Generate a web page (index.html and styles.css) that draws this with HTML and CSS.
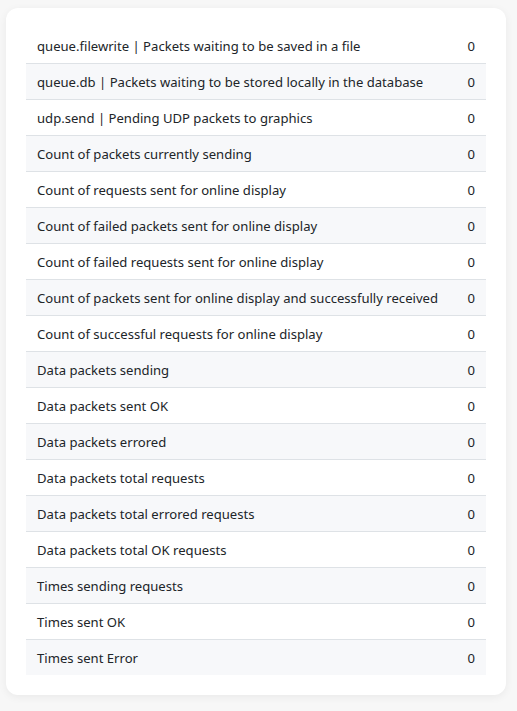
FILE: index.html
```html
<!DOCTYPE html>
<html>
<head>
<meta charset="utf-8">
<link rel="stylesheet" href="styles.css">
</head>
<body>
<div class="card">
  <table class="stats">
    <tbody>
      <tr><td>queue.filewrite | Packets waiting to be saved in a file</td><td class="val">0</td></tr>
      <tr><td>queue.db | Packets waiting to be stored locally in the database</td><td class="val">0</td></tr>
      <tr><td>udp.send | Pending UDP packets to graphics</td><td class="val">0</td></tr>
      <tr><td>Count of packets currently sending</td><td class="val">0</td></tr>
      <tr><td>Count of requests sent for online display</td><td class="val">0</td></tr>
      <tr><td>Count of failed packets sent for online display</td><td class="val">0</td></tr>
      <tr><td>Count of failed requests sent for online display</td><td class="val">0</td></tr>
      <tr><td>Count of packets sent for online display and successfully received</td><td class="val">0</td></tr>
      <tr><td>Count of successful requests for online display</td><td class="val">0</td></tr>
      <tr><td>Data packets sending</td><td class="val">0</td></tr>
      <tr><td>Data packets sent OK</td><td class="val">0</td></tr>
      <tr><td>Data packets errored</td><td class="val">0</td></tr>
      <tr><td>Data packets total requests</td><td class="val">0</td></tr>
      <tr><td>Data packets total errored requests</td><td class="val">0</td></tr>
      <tr><td>Data packets total OK requests</td><td class="val">0</td></tr>
      <tr><td>Times sending requests</td><td class="val">0</td></tr>
      <tr><td>Times sent OK</td><td class="val">0</td></tr>
      <tr><td>Times sent Error</td><td class="val">0</td></tr>
    </tbody>
  </table>
</div>
</body>
</html>
```

FILE: styles.css
```css
html, body {
  background: #f7f7f7;
}
body {
  margin: 0;
  padding: 8px 11px 17px 6px;
  font-family: "Noto Sans", "Open Sans", sans-serif;
  font-size: 13.1px;
  color: #212529;
}
.card {
  background: #ffffff;
  border-radius: 12px;
  box-shadow: 0 2px 8px rgba(0, 0, 0, 0.06);
  padding: 20px;
}
.stats {
  width: 100%;
  border-collapse: collapse;
}
.stats td {
  height: 35px;
  padding: 0 11px;
  border-bottom: 1px solid #dee2e6;
  vertical-align: middle;
  line-height: 20px;
  white-space: nowrap;
}
.stats tr:nth-child(even) td {
  background: #f7f8fa;
}
.stats tr:last-child td {
  border-bottom: none;
}
.stats .val {
  text-align: right;
  width: 20px;
}
```
